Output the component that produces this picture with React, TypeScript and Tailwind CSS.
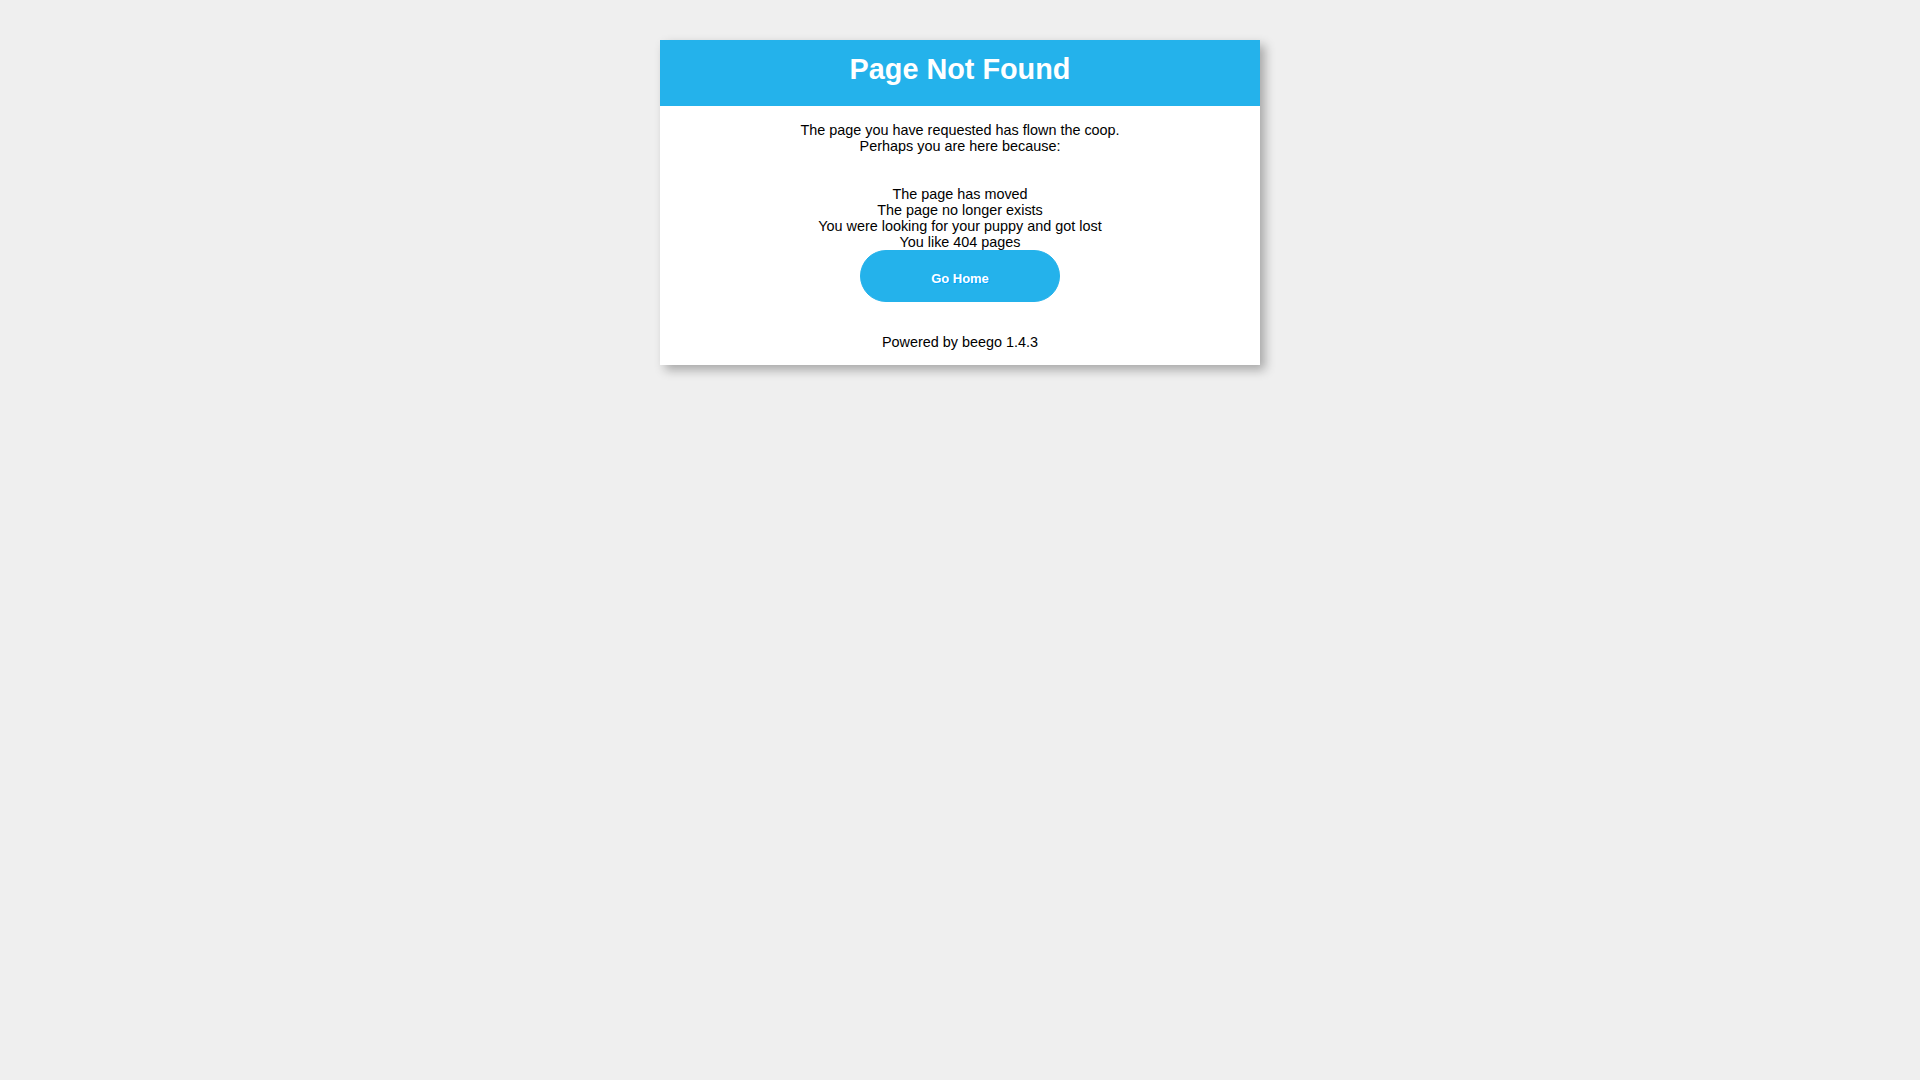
export default function App() {
  return (
    <div className="min-h-[1080px] bg-[#efefef] pt-[40px] text-[14.4px] leading-[normal] text-black [font-family:'Liberation_Sans',Arial,sans-serif]">
      <div className="mx-auto w-[600px] text-center shadow-[5px_5px_10px_rgba(0,0,0,0.3)]">
        <div className="w-[600px] bg-white pb-[15px]">
          <div className="h-[66px] bg-[#24b2eb] p-[13px]">
            <h1 className="text-center text-[28.8px] font-bold leading-[normal] text-white">Page Not Found</h1>
          </div>
          <div>
            <br />
            The page you have requested has flown the coop.
            <br />
            Perhaps you are here because:
            <br />
            <br />
            <div>
              <br />
              The page has moved
              <br />
              The page no longer exists
              <br />
              You were looking for your puppy and got lost
              <br />
              You like 404 pages
            </div>
            <a
              href="#"
              title="Home"
              className="mx-[200px] block rounded-[100px] border border-[#24b2eb] bg-[#24b2eb] px-[20px] pt-[20px] pb-[15px] text-center text-[12.96px] font-bold text-white no-underline [text-shadow:1px_1px_0_#00A5FF]"
            >
              Go Home
            </a>
            <br />
            <br />
            Powered by beego 1.4.3
          </div>
        </div>
      </div>
    </div>
  );
}
